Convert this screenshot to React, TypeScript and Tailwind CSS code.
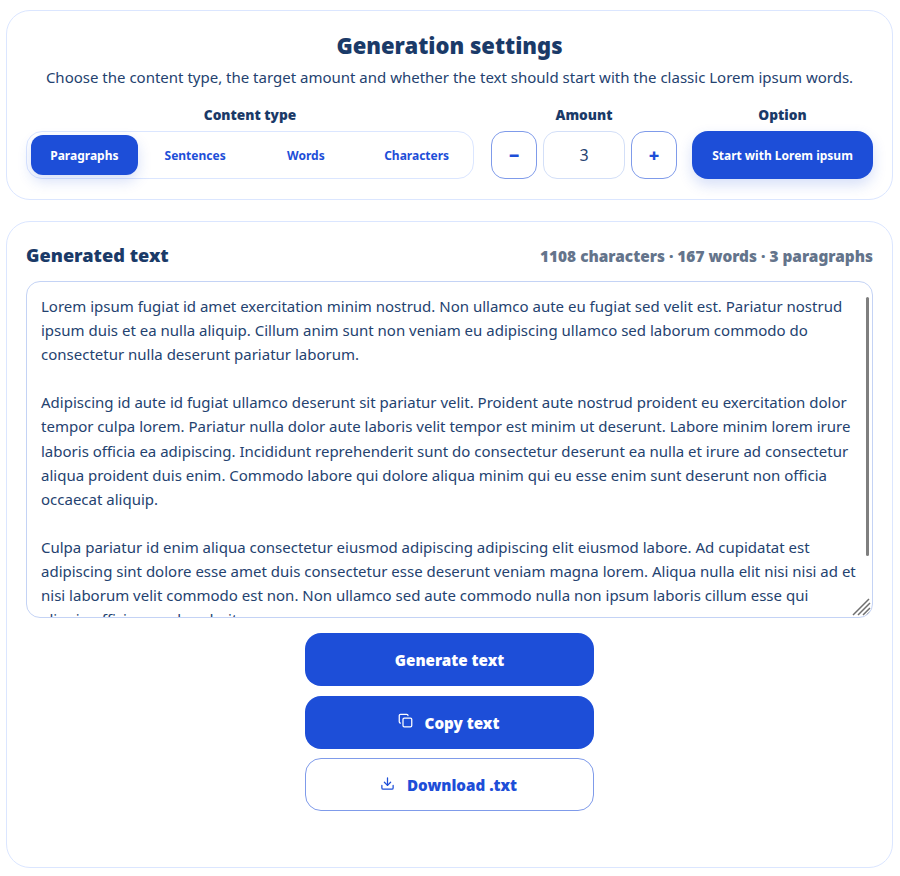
import { useState } from "react";
import { Copy, Download } from "lucide-react";

const TYPES = ["Paragraphs", "Sentences", "Words", "Characters"];

const TEXT = `Lorem ipsum fugiat id amet exercitation minim nostrud. Non ullamco aute eu fugiat sed velit est. Pariatur nostrud ipsum duis et ea nulla aliquip. Cillum anim sunt non veniam eu adipiscing ullamco sed laborum commodo do consectetur nulla deserunt pariatur laborum.

Adipiscing id aute id fugiat ullamco deserunt sit pariatur velit. Proident aute nostrud proident eu exercitation dolor tempor culpa lorem. Pariatur nulla dolor aute laboris velit tempor est minim ut deserunt. Labore minim lorem irure laboris officia ea adipiscing. Incididunt reprehenderit sunt do consectetur deserunt ea nulla et irure ad consectetur aliqua proident duis enim. Commodo labore qui dolore aliqua minim qui eu esse enim sunt deserunt non officia occaecat aliquip.

Culpa pariatur id enim aliqua consectetur eiusmod adipiscing adipiscing elit eiusmod labore. Ad cupidatat est adipiscing sint dolore esse amet duis consectetur esse deserunt veniam magna lorem. Aliqua nulla elit nisi nisi ad et nisi laborum velit commodo est non. Non ullamco sed aute commodo nulla non ipsum laboris cillum esse qui aliquip officia reprehenderit.`;

const labelCls = "text-[13.7px] leading-[20px] font-black text-[#1a3a68] text-center mb-[6px]";
const stepCls =
  "w-[46px] h-[48px] rounded-[14px] border border-[#7f9bea] bg-white text-[#1d4ed8] text-[18px] font-black flex items-center justify-center";
const actionCls =
  "w-[289px] h-[53px] rounded-[16px] pt-[2px] flex items-center justify-center gap-[12px] text-[15.2px] font-black";

export default function App() {
  const [type, setType] = useState("Paragraphs");
  const [amount, setAmount] = useState(3);

  return (
    <div className="min-h-[876px] bg-white pt-[10px] pl-[6px] pr-[7px] font-['Noto_Sans',sans-serif]">
      <section className="h-[190px] rounded-[24px] border border-[#dbe6ff] bg-white px-[19px] pt-[18px]">
        <h2 className="text-[22px] leading-[32px] font-black text-[#1a3a68] text-center">Generation settings</h2>
        <p className="mt-[4px] text-[15px] leading-[24px] text-[#24426f] text-center">
          Choose the content type, the target amount and whether the text should start with the classic Lorem ipsum words.
        </p>
        <div className="mt-[16px] flex">
          <div className="w-[448px]">
            <div className={labelCls}>Content type</div>
            <div className="grid grid-cols-4 gap-[4px] h-[48px] rounded-[16px] border border-[#dbe6ff] p-[3px] pl-[4px]">
              {TYPES.map((t) => (
                <button
                  key={t}
                  onClick={() => setType(t)}
                  className={
                    type === t
                      ? "rounded-[12px] pt-[1px] bg-[#1d4ed8] text-white text-[12px] font-bold shadow-[0_6px_14px_rgba(29,78,216,0.18)]"
                      : "rounded-[12px] pt-[1px] text-[#1d4ed8] text-[12px] font-bold"
                  }
                >
                  {t}
                </button>
              ))}
            </div>
          </div>
          <div className="w-[186px] ml-[17px]">
            <div className={labelCls}>Amount</div>
            <div className="flex gap-[6px]">
              <button className={stepCls} onClick={() => setAmount(amount - 1)}>−</button>
              <div className="w-[82px] h-[48px] rounded-[14px] border border-[#d3dff8] flex items-center justify-center text-[16px] text-[#24426f]">
                {amount}
              </div>
              <button className={stepCls} onClick={() => setAmount(amount + 1)}>+</button>
            </div>
          </div>
          <div className="w-[181px] ml-[15px]">
            <div className={labelCls}>Option</div>
            <button className="w-full h-[48px] rounded-[16px] pt-[1px] bg-[#1d4ed8] text-white text-[12px] font-bold shadow-[0_6px_14px_rgba(29,78,216,0.18)]">
              Start with Lorem ipsum
            </button>
          </div>
        </div>
      </section>

      <section className="mt-[21px] h-[647px] rounded-[24px] border border-[#dbe6ff] bg-white px-[19px] pt-[19px]">
        <div className="flex items-center justify-between h-[28px]">
          <h3 className="text-[18.2px] leading-[28px] font-black text-[#1a3a68]">Generated text</h3>
          <span className="pt-[3px] text-[15.4px] font-black text-[#64748b]">1108 characters · 167 words · 3 paragraphs</span>
        </div>
        <div className="relative mt-[12px] h-[337px] rounded-[14px] border border-[#c4d3f5] overflow-hidden">
          <textarea
            readOnly
            value={TEXT}
            className="block w-full h-full resize-none overflow-hidden outline-none px-[14px] py-[12px] text-[15px] leading-[24.1px] text-[#24426f]"
          />
          <div className="absolute right-[3px] top-[15px] w-[3px] h-[259px] rounded-full bg-[#7f7f7f]" />
          <svg className="absolute right-0 bottom-0" width="20" height="20" viewBox="0 0 20 20" stroke="#6f6f6f" strokeWidth="1.5">
            <path d="M1 18 17 2M6 18 18 6M11 18 18 11M15 18 18 15" />
          </svg>
        </div>
        <div className="mt-[15px] flex flex-col items-center gap-[9.5px]">
          <button className={actionCls + " bg-[#1d4ed8] text-white"}>Generate text</button>
          <button className={actionCls + " bg-[#1d4ed8] text-white"}>
            <Copy size={15} className="-mt-[5px] -ml-[2px]" />
            Copy text
          </button>
          <button className={actionCls + " bg-white border border-[#7f9bea] text-[#1d4ed8]"}>
            <Download size={15} className="-mt-[5px] -ml-[2px]" />
            Download .txt
          </button>
        </div>
      </section>
    </div>
  );
}
